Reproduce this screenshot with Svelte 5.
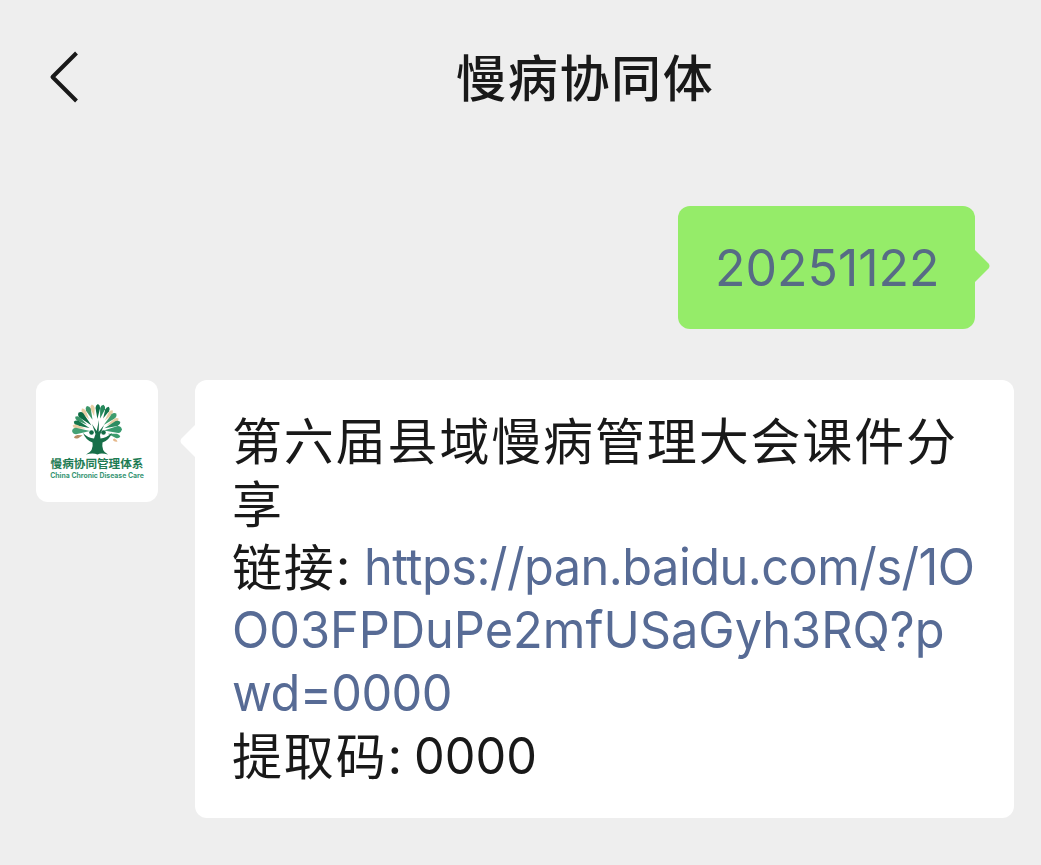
<script>
  const petals = [
    [-88, 27, 15, 2.3, '#0f7048'], [-101, 27, 12, 2.2, '#e6cda3'], [-76, 27, 14, 2.5, '#27895c'],
    [-112, 27, 15, 2.6, '#3a9568'], [-64, 27, 13, 2.1, '#14764b'], [-53, 26, 13, 2, '#e6cda3'],
    [-42, 26, 17, 2.6, '#3d9c6d'], [-30, 25, 14, 2, '#e6cda3'], [-21, 25, 17, 2.6, '#2c8c61'],
    [-4, 25, 18, 3.5, '#389a6e'], [14, 24, 13, 2.2, '#3d9c6d'], [-124, 27, 13, 2, '#e6cda3'],
    [-135, 26, 18, 2.9, '#0d6a42'], [-147, 26, 14, 2.2, '#3a9568'], [-158, 25, 17, 2.5, '#14764b'],
    [-168, 25, 13, 1.9, '#e6cda3'], [-180, 25, 18, 3.3, '#43a174'], [-196, 24, 9, 1.7, '#b58c63'],
    [27, 23, 5, 1.4, '#e6b98d']
  ];
</script>

<main>
  <header>
    <svg class="back" viewBox="0 0 32 54" aria-hidden="true">
      <path d="M28.500 3 4.500 27 28.500 51" />
    </svg>
    <h1>慢病协同体</h1>
  </header>

  <section class="sent">
    <div class="bubble green">
      <span class="number">20251122</span>
      <svg class="tip right" viewBox="0 0 17 34" aria-hidden="true"><path d="M0 0 14.500 14.500Q16.500 17 14.500 19.500L0 34Z" /></svg>
    </div>
  </section>

  <section class="received">
    <div class="avatar">
      <svg class="tree" viewBox="0 0 58 52" aria-hidden="true">
        {#each petals as [angle, radius, length, width, color]}
          <path
            transform={`translate(29 27) rotate(${angle})`}
            d={`M${radius - length} 0L${radius - 4} ${-width}Q${radius - 1} ${-width} ${radius} 0Q${radius - 1} ${width} ${radius - 4} ${width}Z`}
            fill={color}
          />
        {/each}
        <circle cx="23.500" cy="28.500" r="2.300" fill="#116c45" />
        <circle cx="35.500" cy="28.500" r="2.300" fill="#116c45" />
        <path d="M15 29Q20 34 26 34.500L27.500 30 24 20 28.700 27 31 16 30.700 28 36 21 32 31 32.500 34.500Q38 34 44 29Q41 36.500 34.500 38.500Q33 47 40 50.500Q33 48.500 29.500 50.500Q25 48.500 18 50.500Q26 47 24.500 38.500Q18 36.500 15 29Z" fill="#176f49" />
      </svg>
      <span class="brand">慢病协同管理体系</span>
      <span class="brand-en">China Chronic Disease Care</span>
    </div>
    <div class="bubble white">
      <svg class="tip left" viewBox="0 0 17 34" aria-hidden="true"><path d="M17 0 2.500 14.500Q.5 17 2.500 19.500L17 34Z" /></svg>
      <p class="cjk">第六届县域慢病管理大会课件分</p>
      <p class="cjk">享</p>
      <p><span class="cjk">链接</span><span class="colon wide">:</span><a class="url1" href="#link">https://pan.baidu.com/s/1O</a></p>
      <p><a class="url2" href="#link">O03FPDuPe2mfUSaGyh3RQ?p</a></p>
      <p><a class="url3" href="#link">wd=0000</a></p>
      <p><span class="cjk">提取码</span><span class="colon">:</span><span class="code">0000</span></p>
    </div>
  </section>
</main>

<style>
  :global(body) { margin: 0; background: #eee; }
  main {
    width: 1041px; height: 865px; overflow: hidden; box-sizing: border-box;
    background: #eee; color: #191919;
    font-family: Inter, "Noto Sans CJK SC", sans-serif;
    font-size: 51px; line-height: 63px;
  }
  header { height: 206px; display: flex; align-items: flex-start; }
  .back { width: 32px; height: 54px; margin: 50px 0 0 48px; fill: none; stroke: #191919; stroke-width: 4; stroke-linejoin: round; }
  h1 { margin: 44px 0 0 376px; font: 500 50px/63px "Noto Sans CJK SC", sans-serif; letter-spacing: 1.7px; white-space: nowrap; }
  .sent { display: flex; justify-content: flex-end; padding-right: 66px; }
  .bubble { position: relative; box-sizing: border-box; border-radius: 12px; }
  .green { width: 297px; height: 123px; padding: 30px 0 0 37px; background: #95ec69; color: #576b85; }
  .number, a, .code { display: inline-block; transform-origin: left center; transform: scaleX(.955); }
  .number { transform: scaleX(.98); }
  .tip { position: absolute; width: 17px; height: 34px; }
  .tip.right { left: 296px; top: 43px; fill: #95ec69; }
  .tip.left { right: 818px; top: 44px; fill: #fff; }
  .received { display: flex; gap: 37px; padding: 51px 0 0 36px; }
  .avatar { width: 122px; height: 122px; border-radius: 12px; background: #fff; display: flex; flex-direction: column; align-items: center; }
  .tree { width: 58px; height: 52px; margin-top: 24px; flex: none; }
  .brand { font: 700 11.6px/14px "Noto Sans CJK SC", sans-serif; color: #1c7b52; white-space: nowrap; }
  .brand-en { font: 700 6.9px/9px Inter, sans-serif; color: #379573; white-space: nowrap; margin-top: 1px; }
  .white { width: 819px; height: 438px; padding: 29px 0 0 37px; background: #fff; }
  p { margin: 0; height: 63px; white-space: nowrap; display: flex; }
  .cjk { font-family: "Noto Sans CJK SC", sans-serif; font-size: 50px; letter-spacing: 1.85px; line-height: 59px; }
  a { color: #576b95; text-decoration: none; }
  .colon { width: 26px; }
  .colon.wide { width: 28px; }
  .url1 { letter-spacing: -.55px; }
  .url3 { letter-spacing: -.6px; }
</style>
